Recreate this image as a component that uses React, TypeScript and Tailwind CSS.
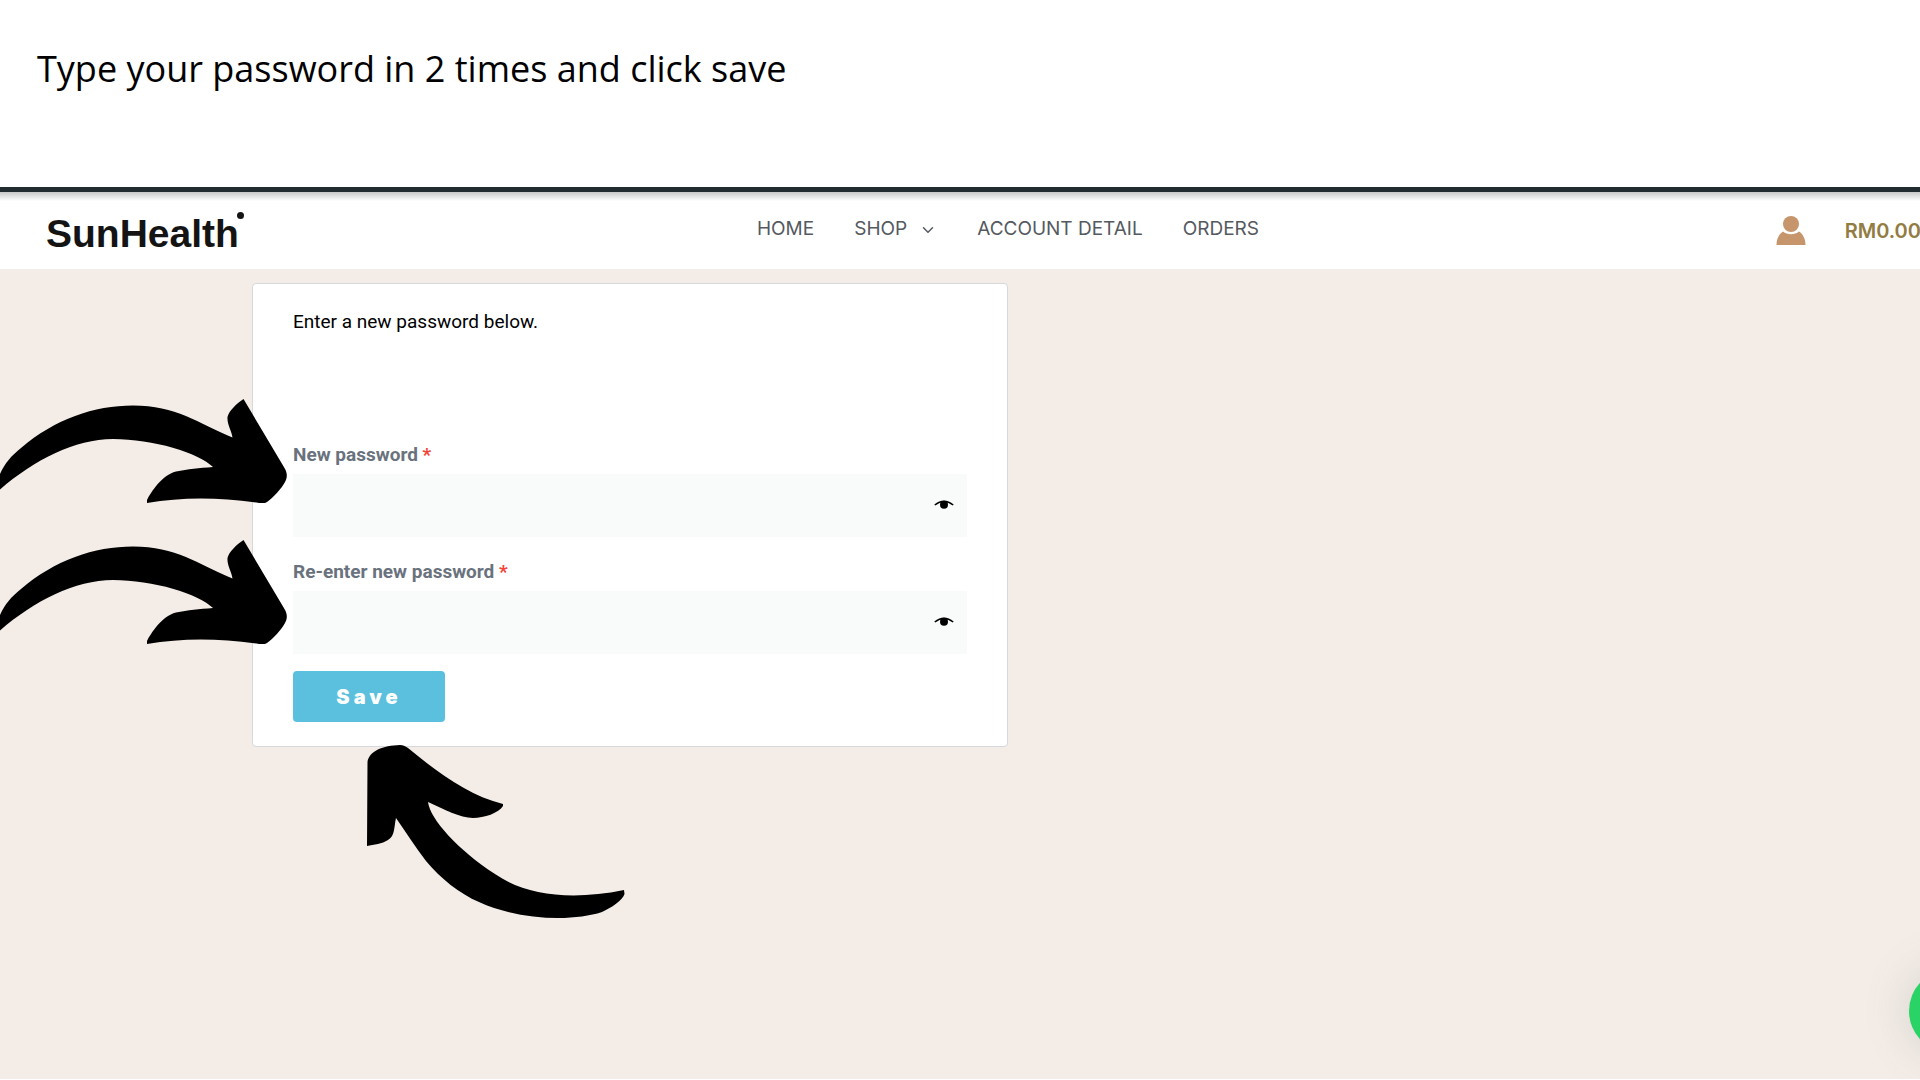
import { ChevronDown } from "lucide-react";

const navLinks = [
  { label: "HOME", hasMenu: false },
  { label: "SHOP", hasMenu: true },
  { label: "ACCOUNT DETAIL", hasMenu: false },
  { label: "ORDERS", hasMenu: false },
];

function EyeIcon() {
  return (
    <svg viewBox="0 0 20 10" className="h-[10px] w-5" fill="none">
      <path d="M0.8 5 Q10 -2.4 19.2 5" stroke="#000" strokeWidth="1.6" />
      <circle cx="10" cy="4.8" r="4" fill="#000" />
    </svg>
  );
}

function SideArrow() {
  return (
    <svg width="288" height="106" viewBox="0 0 288 106" fill="#000">
      <path d="M0 75 C5 64 11 57 21 49 C55 20 94 6.500 133 6.500 C176 6.500 198 24 232.500 38.500 C231 30 227 26 227.500 18 C229 12 236 5 243.500 0 L284.500 69 C288 75 287 79 285 83 C281 90 274 98 267 103 C265 104.500 262 104 259 104 C218 98 182 98 147 104 L147 101 C151 93 162 76 176 72.500 C188 70 199 69 213 68 C199 54 153 40 113 40 C75 40 34 61 0 90.500 Z" />
    </svg>
  );
}

function SaveArrow() {
  return (
    <svg width="259" height="174" viewBox="0 0 259 174" fill="#000">
      <path d="M0.500 17 C2 6 16 0.500 33 0 C36 0 38 1 41 3 C71 28 103 51 136 59 L136 61 C132 68 117 73 106 73 C93 73 77 64 61 57 C63 74 91 105 128 129 C158 150 203 156 257 145 L257.500 149 C256 155 244 163 235 167 C205 177 151 175 112 157 C93 149 73 133 59 116 C48 102 39 87 29 73 C27 82 28 91 21 95 C15 99 7 99.500 0 101 Z" />
    </svg>
  );
}

function PasswordField({ id, label }: { id: string; label: string }) {
  return (
    <div>
      <label htmlFor={id} className="block text-[19px] leading-7 font-bold text-[#69727d]">
        {label} <span className="text-[#f44336]">*</span>
      </label>
      <div className="relative mt-[5px]">
        <input
          id={id}
          type="password"
          className="block h-[63px] w-full bg-[#f9fbfa] px-4 pr-12 outline-none"
        />
        <button
          type="button"
          aria-label="Show password"
          className="absolute top-[26px] right-[13px]"
        >
          <EyeIcon />
        </button>
      </div>
    </div>
  );
}

export default function App() {
  return (
    <div className="relative flex min-h-screen flex-col overflow-hidden bg-white font-['Roboto',sans-serif]">

      {/* Instruction */}

      <div className="h-[187px] px-[37px] pt-[44px]">
        <h1 className="font-['Open_Sans',sans-serif] text-[36px] leading-[50px] text-black">
          Type your password in 2 times and click save
        </h1>
      </div>

      {/* Header */}

      <header className="h-[82px] border-t-[5px] border-[#222b30] bg-linear-to-b from-[#c8c8c8] to-white to-[9px]">
        <div className="grid h-full w-[105%] grid-cols-[1fr_auto_1fr] items-center px-[46px]">

          <a href="#" className="relative justify-self-start pt-[6px] font-['Liberation_Sans',Arial,sans-serif] text-[39px] leading-10 font-bold text-[#141414]">
            SunHealth
            <span className="absolute top-[4px] -right-[5px] h-[7px] w-[7px] rounded-full bg-[#141414]" />
          </a>

          <nav className="flex items-center gap-10 pb-[2px] font-['Inter',sans-serif] text-[19px] text-[#54595f]">
            {navLinks.map((link) => (
              <a key={link.label} href="#" className="flex items-center gap-3">
                {link.label}
                {link.hasMenu && <ChevronDown size={18} />}
              </a>
            ))}
          </nav>

          <div className="flex items-center gap-[39px] justify-self-end pr-[49px]">
            <a href="#" aria-label="Account">
              <svg viewBox="0 0 30 30" className="h-[30px] w-[30px]" fill="#c6956c">
                <circle cx="15" cy="8" r="8" />
                <path d="M7 15.500 C11 19 19 19 23 15.500 C27 18 29.500 23 29.500 29 H0.500 C0.500 23 3 18 7 15.500 Z" />
              </svg>
            </a>
            <a href="#" className="font-['Inter',sans-serif] text-[20px] font-semibold text-[#927c42]">
              RM0.00
            </a>
          </div>

        </div>
      </header>

      {/* Password form */}

      <main className="mb-px flex-1 bg-[#f4ece6] pt-[14px] pl-[252px]">
        <form className="w-[756px] rounded-[4px] border border-[#d5d8dc] bg-white px-10 pt-6 pb-6">
          <p className="text-[19px] leading-7 text-black">Enter a new password below.</p>
          <div className="mt-[105px] flex flex-col gap-[21px]">
            <PasswordField id="new-password" label="New password" />
            <PasswordField id="confirm-password" label="Re-enter new password" />
          </div>
          <button
            type="submit"
            className="mt-[17px] h-[51px] w-[152px] rounded-[4px] bg-[#5bc0de] font-['Inter',sans-serif] text-[20px] font-black tracking-[4px] text-white"
          >
            Save
          </button>
        </form>
      </main>

      {/* Pointers over the form */}

      <div className="pointer-events-none absolute top-[399px] left-0">
        <SideArrow />
      </div>
      <div className="pointer-events-none absolute top-[540px] left-0">
        <SideArrow />
      </div>
      <div className="pointer-events-none absolute top-[745px] left-[367px]">
        <SaveArrow />
      </div>

      {/* Chat button */}

      <button
        type="button"
        aria-label="Chat"
        className="absolute -right-[73px] bottom-[27px] h-[84px] w-[84px] rounded-full bg-[#2ad366] shadow-[0_0_44px_rgba(120,140,140,0.25)]"
      />
    </div>
  );
}
